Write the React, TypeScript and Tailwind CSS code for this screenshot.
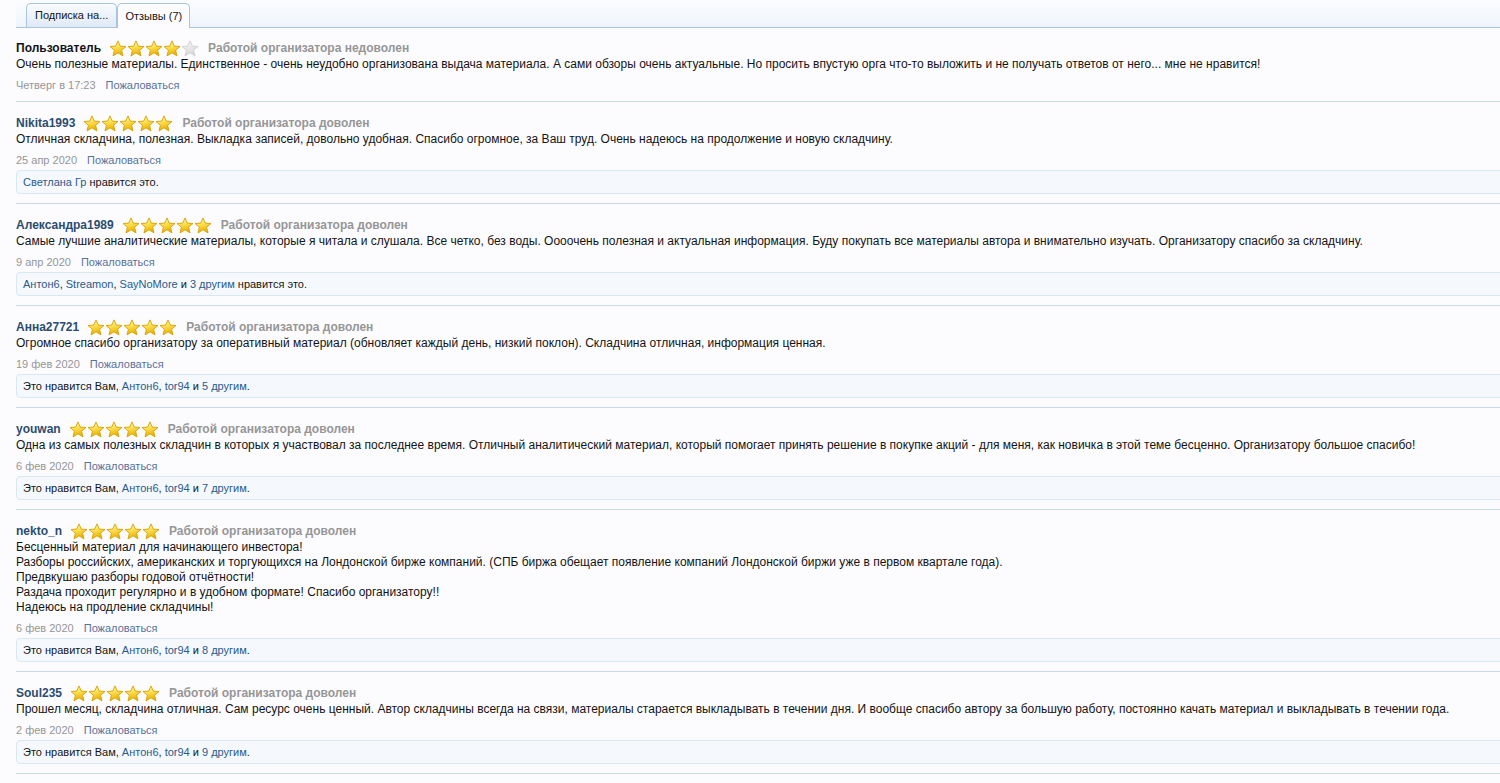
import React from "react";

type Like = { parts: { t: string; link?: boolean }[] };
type Review = {
  name: string;
  guest?: boolean;
  rating: number;
  verdict: string;
  lines: string[];
  date: string;
  like?: Like;
};

const reviews: Review[] = [
  {
    name: "Пользователь",
    guest: true,
    rating: 4,
    verdict: "Работой организатора недоволен",
    lines: [
      "Очень полезные материалы. Единственное - очень неудобно организована выдача материала. А сами обзоры очень актуальные. Но просить впустую орга что-то выложить и не получать ответов от него... мне не нравится!",
    ],
    date: "Четверг в 17:23",
  },
  {
    name: "Nikita1993",
    rating: 5,
    verdict: "Работой организатора доволен",
    lines: [
      "Отличная складчина, полезная. Выкладка записей, довольно удобная. Спасибо огромное, за Ваш труд. Очень надеюсь на продолжение и новую складчину.",
    ],
    date: "25 апр 2020",
    like: { parts: [{ t: "Светлана Гр", link: true }, { t: " нравится это." }] },
  },
  {
    name: "Александра1989",
    rating: 5,
    verdict: "Работой организатора доволен",
    lines: [
      "Самые лучшие аналитические материалы, которые я читала и слушала. Все четко, без воды. Оооочень полезная и актуальная информация. Буду покупать все материалы автора и внимательно изучать. Организатору спасибо за складчину.",
    ],
    date: "9 апр 2020",
    like: {
      parts: [
        { t: "Антон6", link: true },
        { t: ", " },
        { t: "Streamon", link: true },
        { t: ", " },
        { t: "SayNoMore", link: true },
        { t: " и " },
        { t: "3 другим", link: true },
        { t: " нравится это." },
      ],
    },
  },
  {
    name: "Анна27721",
    rating: 5,
    verdict: "Работой организатора доволен",
    lines: [
      "Огромное спасибо организатору за оперативный материал (обновляет каждый день, низкий поклон). Складчина отличная, информация ценная.",
    ],
    date: "19 фев 2020",
    like: {
      parts: [
        { t: "Это нравится Вам, " },
        { t: "Антон6", link: true },
        { t: ", " },
        { t: "tor94", link: true },
        { t: " и " },
        { t: "5 другим", link: true },
        { t: "." },
      ],
    },
  },
  {
    name: "youwan",
    rating: 5,
    verdict: "Работой организатора доволен",
    lines: [
      "Одна из самых полезных складчин в которых я участвовал за последнее время. Отличный аналитический материал, который помогает принять решение в покупке акций - для меня, как новичка в этой теме бесценно. Организатору большое спасибо!",
    ],
    date: "6 фев 2020",
    like: {
      parts: [
        { t: "Это нравится Вам, " },
        { t: "Антон6", link: true },
        { t: ", " },
        { t: "tor94", link: true },
        { t: " и " },
        { t: "7 другим", link: true },
        { t: "." },
      ],
    },
  },
  {
    name: "nekto_n",
    rating: 5,
    verdict: "Работой организатора доволен",
    lines: [
      "Бесценный материал для начинающего инвестора!",
      "Разборы российских, американских и торгующихся на Лондонской бирже компаний. (СПБ биржа обещает появление компаний Лондонской биржи уже в первом квартале года).",
      "Предвкушаю разборы годовой отчётности!",
      "Раздача проходит регулярно и в удобном формате! Спасибо организатору!!",
      "Надеюсь на продление складчины!",
    ],
    date: "6 фев 2020",
    like: {
      parts: [
        { t: "Это нравится Вам, " },
        { t: "Антон6", link: true },
        { t: ", " },
        { t: "tor94", link: true },
        { t: " и " },
        { t: "8 другим", link: true },
        { t: "." },
      ],
    },
  },
  {
    name: "Soul235",
    rating: 5,
    verdict: "Работой организатора доволен",
    lines: [
      "Прошел месяц, складчина отличная. Сам ресурс очень ценный. Автор складчины всегда на связи, материалы старается выкладывать в течении дня. И вообще спасибо автору за большую работу, постоянно качать материал и выкладывать в течении года.",
    ],
    date: "2 фев 2020",
    like: {
      parts: [
        { t: "Это нравится Вам, " },
        { t: "Антон6", link: true },
        { t: ", " },
        { t: "tor94", link: true },
        { t: " и " },
        { t: "9 другим", link: true },
        { t: "." },
      ],
    },
  },
];

function Star({ filled, id }: { filled: boolean; id: string }) {
  return (
    <svg width="18" height="17" viewBox="0 0 18 17" className="block">
      <defs>
        <linearGradient id={id} x1="0" y1="0" x2="0.3" y2="1">
          {filled ? (
            <>
              <stop offset="0" stopColor="#fffbd0" />
              <stop offset="0.45" stopColor="#ffe45a" />
              <stop offset="1" stopColor="#e8b000" />
            </>
          ) : (
            <>
              <stop offset="0" stopColor="#fafafa" />
              <stop offset="1" stopColor="#d9d9d9" />
            </>
          )}
        </linearGradient>
      </defs>
      <path
        d="M9 0.9 L11.3 6.1 L17 6.5 L12.6 10.2 L14 15.9 L9 12.8 L4 15.9 L5.4 10.2 L1 6.5 L6.7 6.1 Z"
        fill={`url(#${id})`}
        stroke={filled ? "#d4a200" : "#cfcfcf"}
        strokeWidth="0.9"
        strokeLinejoin="round"
      />
    </svg>
  );
}

function Stars({ n, k }: { n: number; k: number }) {
  return (
    <div className="flex items-center">
      {[0, 1, 2, 3, 4].map((i) => (
        <Star key={i} filled={i < n} id={`st-${k}-${i}`} />
      ))}
    </div>
  );
}

function ReviewItem({ r, idx, first }: { r: Review; idx: number; first: boolean }) {
  return (
    <div
      className={`border-b border-[#c8d9ea] ${first ? "pt-[11px] pb-[8px]" : "pt-[12px] pb-[9px]"}`}
    >
      <div className="flex items-center h-[18px]">
        <span
          className={`text-[12px] font-bold leading-[18px] ${r.guest ? "text-[#141414]" : "text-[#2b4c6f]"}`}
        >
          {r.name}
        </span>
        <div className="ml-[8px]">
          <Stars n={r.rating} k={idx} />
        </div>
        <span className="ml-[9px] text-[12px] font-bold text-[#969696] leading-[18px]">
          {r.verdict}
        </span>
      </div>
      <div className="text-[12px] leading-[15px] text-[#141414]">
        {r.lines.map((l, i) => (
          <div key={i}>{l}</div>
        ))}
      </div>
      <div className="mt-[5px] h-[16px] flex items-center text-[11px] leading-[16px]">
        <span className="text-[#969696]">{r.date}</span>
        <span className="ml-[10px] text-[#58719a]">Пожаловаться</span>
      </div>
      {r.like && (
        <div className="mt-[2px] h-[24px] flex items-center rounded-[4px] border border-[#d9e6f3] bg-[#f5f9fe] pl-[6px] text-[11px] text-[#141414]">
          <span className="whitespace-pre">
            {r.like.parts.map((p, i) => (
              <span key={i} className={p.link ? "text-[#2b5a8c]" : ""}>
                {p.t}
              </span>
            ))}
          </span>
        </div>
      )}
    </div>
  );
}

export default function App() {
  return (
    <div
      className="min-h-[783px] w-full overflow-hidden bg-[#fcfcff]"
      style={{ fontFamily: '"Liberation Sans", Arial, sans-serif' }}
    >
      <div className="pl-4">
        <div className="-mr-3">
          <div className="h-[28px] flex items-end pl-[10px] border-b border-[#a9c5df] bg-gradient-to-b from-[#fcfcff] to-[#eef5fb]">
            <div className="h-[24px] px-[8px] flex items-center rounded-t-[5px] border border-b-0 border-[#a9c5df] bg-gradient-to-b from-[#f8fbfe] to-[#dfeaf6] text-[11px] text-[#141414]">
              Подписка на...
            </div>
            <div className="relative -mb-px h-[25px] px-[7px] flex items-center rounded-t-[5px] border border-b-0 border-[#a9c5df] bg-[#fcfcff] text-[11px] text-[#141414]">
              Отзывы (7)
            </div>
          </div>
          {reviews.map((r, i) => (
            <ReviewItem key={i} r={r} idx={i} first={i === 0} />
          ))}
        </div>
      </div>
    </div>
  );
}
